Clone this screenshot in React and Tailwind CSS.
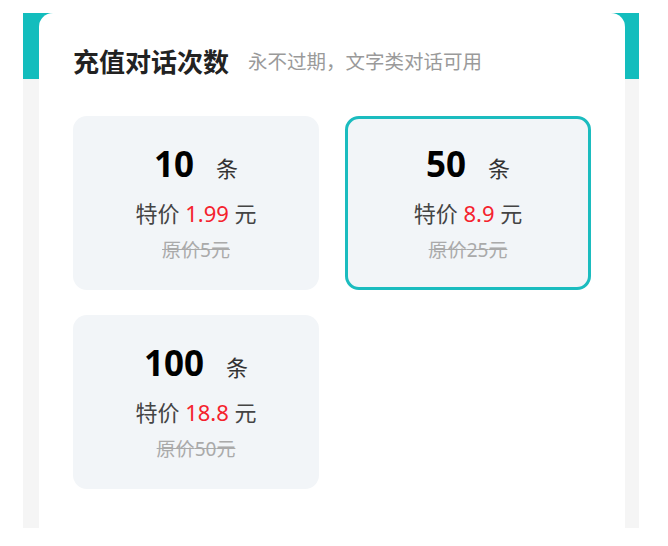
const plans = [
  { count: 10, price: "1.99", original: 5, active: false },
  { count: 50, price: "8.9", original: 25, active: true },
  { count: 100, price: "18.8", original: 50, active: false },
];

function PlanCard({ plan }) {
  return (
    <div
      className={`h-[174px] rounded-[14px] border-[3px] bg-[#f2f5f8] flex flex-col items-center justify-center ${
        plan.active ? "border-[#1bbcbf]" : "border-transparent"
      }`}
    >
      <div className="flex items-baseline h-[42px] leading-[42px] -mt-[3px]">
        <span className="text-[35px] font-bold text-black">{plan.count}</span>
        <span className="ml-[22px] text-[22px] text-[#333]">条</span>
      </div>
      <div className="mt-[13px] text-[22px] leading-[30px] text-[#444]">
        特价 <span className="text-[#f5222d]">{plan.price}</span> 元
      </div>
      <div className="mt-[9px] -mb-[2px] text-[19px] leading-[26px] text-[#aaa] line-through">
        原价{plan.original}元
      </div>
    </div>
  );
}

export default function App() {
  return (
    <div
      className="w-[668px] h-[546px] bg-white pt-[13px] pl-[23px]"
      style={{ fontFamily: '"Noto Sans", "Noto Sans CJK SC", sans-serif' }}
    >
      <div className="w-[616px] h-[515px] flex bg-[linear-gradient(to_bottom,#13bdbd_0px,#13bdbd_66px,#f5f5f5_66px)]">
        <div className="ml-[16px] mr-[14px] flex-1 bg-white rounded-t-[14px] px-[34px]">
          <div className="flex items-center h-[46px] mt-[26px]">
            <h2 className="text-[26px] font-bold text-[#222]">充值对话次数</h2>
            <span className="ml-[19px] text-[19.5px] text-[#9a9a9a]">
              永不过期，文字类对话可用
            </span>
          </div>
          <div className="mt-[31px] grid grid-cols-2 gap-x-[26px] gap-y-[25px]">
            {plans.map((p) => (
              <PlanCard key={p.count} plan={p} />
            ))}
          </div>
        </div>
      </div>
    </div>
  );
}
